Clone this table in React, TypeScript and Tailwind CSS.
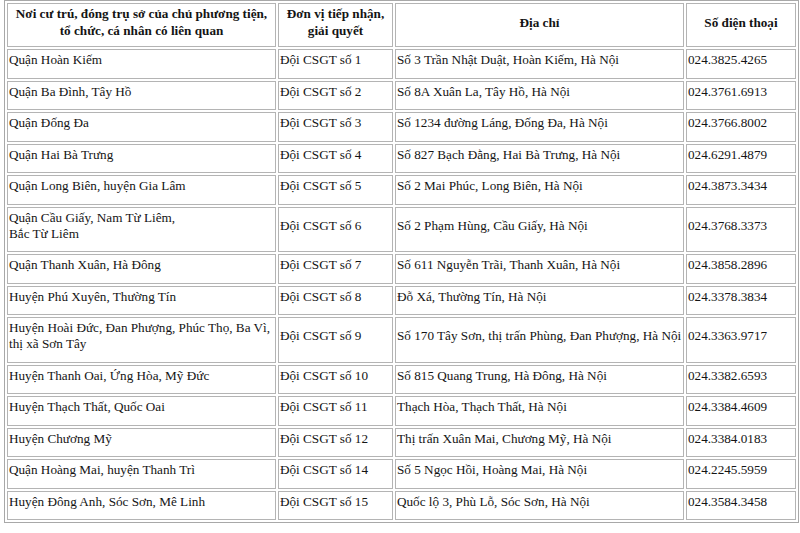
import React from "react";

type Row = {
  area: string[];
  unit: string;
  address: string;
  phone: string;
};

const rows: Row[] = [
  { area: ["Quận Hoàn Kiếm"], unit: "Đội CSGT số 1", address: "Số 3 Trần Nhật Duật, Hoàn Kiếm, Hà Nội", phone: "024.3825.4265" },
  { area: ["Quận Ba Đình, Tây Hồ"], unit: "Đội CSGT số 2", address: "Số 8A Xuân La, Tây Hồ, Hà Nội", phone: "024.3761.6913" },
  { area: ["Quận Đống Đa"], unit: "Đội CSGT số 3", address: "Số 1234 đường Láng, Đống Đa, Hà Nội", phone: "024.3766.8002" },
  { area: ["Quận Hai Bà Trưng"], unit: "Đội CSGT số 4", address: "Số 827 Bạch Đằng, Hai Bà Trưng, Hà Nội", phone: "024.6291.4879" },
  { area: ["Quận Long Biên, huyện Gia Lâm"], unit: "Đội CSGT số 5", address: "Số 2 Mai Phúc, Long Biên, Hà Nội", phone: "024.3873.3434" },
  { area: ["Quận Cầu Giấy, Nam Từ Liêm,", "Bắc Từ Liêm"], unit: "Đội CSGT số 6", address: "Số 2 Phạm Hùng, Cầu Giấy, Hà Nội", phone: "024.3768.3373" },
  { area: ["Quận Thanh Xuân, Hà Đông"], unit: "Đội CSGT số 7", address: "Số 611 Nguyễn Trãi, Thanh Xuân, Hà Nội", phone: "024.3858.2896" },
  { area: ["Huyện Phú Xuyên, Thường Tín"], unit: "Đội CSGT số 8", address: "Đỗ Xá, Thường Tín, Hà Nội", phone: "024.3378.3834" },
  { area: ["Huyện Hoài Đức, Đan Phượng, Phúc Thọ, Ba Vì,", "thị xã Sơn Tây"], unit: "Đội CSGT số 9", address: "Số 170 Tây Sơn, thị trấn Phùng, Đan Phượng, Hà Nội", phone: "024.3363.9717" },
  { area: ["Huyện Thanh Oai, Ứng Hòa, Mỹ Đức"], unit: "Đội CSGT số 10", address: "Số 815 Quang Trung, Hà Đông, Hà Nội", phone: "024.3382.6593" },
  { area: ["Huyện Thạch Thất, Quốc Oai"], unit: "Đội CSGT số 11", address: "Thạch Hòa, Thạch Thất, Hà Nội", phone: "024.3384.4609" },
  { area: ["Huyện Chương Mỹ"], unit: "Đội CSGT số 12", address: "Thị trấn Xuân Mai, Chương Mỹ, Hà Nội", phone: "024.3384.0183" },
  { area: ["Quận Hoàng Mai, huyện Thanh Trì"], unit: "Đội CSGT số 14", address: "Số 5 Ngọc Hồi, Hoàng Mai, Hà Nội", phone: "024.2245.5959" },
  { area: ["Huyện Đông Anh, Sóc Sơn, Mê Linh"], unit: "Đội CSGT số 15", address: "Quốc lộ 3, Phù Lỗ, Sóc Sơn, Hà Nội", phone: "024.3584.3458" },
];

const th = "border border-[#b4b4b4] align-middle text-center font-bold pt-[1px] pb-[7px] leading-[17px]";
const td = "border border-[#b4b4b4] align-middle text-left font-normal pl-[1px] pt-[2px] pb-[9.5px] leading-[16px] whitespace-nowrap";

export default function App() {
  return (
    <div className="w-[800px] h-[533px] bg-white overflow-hidden pl-[4px] font-['Liberation_Serif','Times_New_Roman',serif] text-[13.2px] text-[#141414]">
      <table className="table-fixed w-[795px] border border-[#a8a8a8] border-separate border-spacing-[2px]">
        <colgroup>
          <col className="w-[269px]" />
          <col className="w-[115px]" />
          <col className="w-[289px]" />
          <col className="w-[110px]" />
        </colgroup>
        <thead>
          <tr>
            <th className={th}>
              Nơi cư trú, đóng trụ sở của chủ phương tiện,
              <br />
              tổ chức, cá nhân có liên quan
            </th>
            <th className={th}>
              Đơn vị tiếp nhận,
              <br />
              giải quyết
            </th>
            <th className={th}>Địa chỉ</th>
            <th className={th}>Số điện thoại</th>
          </tr>
        </thead>
        <tbody>
          {rows.map((r) => (
            <tr key={r.unit}>
              <td className={td}>
                {r.area.map((line, i) => (
                  <div key={i}>{line}</div>
                ))}
              </td>
              <td className={td}>{r.unit}</td>
              <td className={td}>{r.address}</td>
              <td className={td}>{r.phone}</td>
            </tr>
          ))}
        </tbody>
      </table>
    </div>
  );
}
